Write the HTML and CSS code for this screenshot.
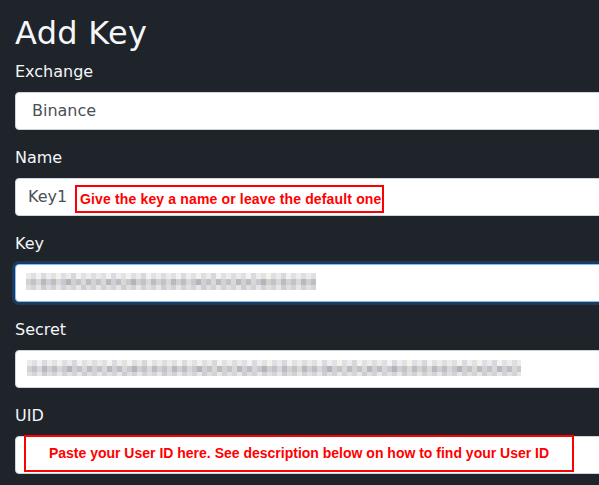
FILE: index.html
```html
<!DOCTYPE html>
<html>
<head>
<meta charset="utf-8">
<link rel="stylesheet" href="styles.css">
</head>
<body>
<div class="container">
  <h2 class="title">Add Key</h2>
  <div class="group">
    <label class="label">Exchange</label>
    <div class="control select">Binance</div>
  </div>
  <div class="group">
    <label class="label">Name</label>
    <div class="control">Key1
      <div class="note note-name">Give the key a name or leave the default one</div>
    </div>
  </div>
  <div class="group">
    <label class="label">Key</label>
    <div class="control focus"><span class="blur blur-key"></span></div>
  </div>
  <div class="group">
    <label class="label">Secret</label>
    <div class="control"><span class="blur blur-secret"></span></div>
  </div>
  <div class="group">
    <label class="label">UID</label>
    <div class="control">
      <div class="note note-uid">Paste your User ID here. See description below on how to find your User ID</div>
    </div>
  </div>
</div>
</body>
</html>
```
FILE: styles.css
```css
html, body {
  margin: 0;
  padding: 0;
  background: #1f232a;
  overflow: hidden;
}
.container {
  width: 720px;
  padding: 14px 15px;
  font-family: "DejaVu Sans", sans-serif;
  color: #f4f6f8;
}
.title {
  font-size: 32px;
  font-weight: 400;
  line-height: 38.4px;
  margin: 0 0 8px 0;
  letter-spacing: 0.3px;
}
.group {
  margin-bottom: 16px;
}
.label {
  display: block;
  font-size: 16px;
  line-height: 24px;
  margin-bottom: 8px;
}
.control {
  position: relative;
  box-sizing: border-box;
  height: 38px;
  padding: 6px 12px;
  line-height: 24px;
  font-size: 16px;
  color: #495057;
  background: #fff;
  border: 1px solid #ced4da;
  border-radius: 4px;
}
.select {
  padding-left: 16px;
}
.focus {
  border-color: #80bdff;
  box-shadow: 0 0 0 3px #1d3a5c;
}
.blur {
  display: block;
  height: 17px;
  margin-top: 2px;
  margin-left: -2px;
  background:
    repeating-linear-gradient(to right, #ecebeb 0 5px, #e0e0e4 5px 10px, #f4f2f1 10px 15px, #d8dbe0 15px 20px, #eeeeee 20px 25px, #e2e2e2 25px 30px, #f5f2ec 30px 35px, #dcdfe4 35px 40px, #ebebeb 40px 45px, #d6d8dd 45px 50px, #f2f2f2 50px 55px, #e1e1e1 55px 60px, #ededf0 60px 65px, #dedede 65px 70px) 0 0 / 100% 6px no-repeat,
    repeating-linear-gradient(to right, #d2d2d6 0 5px, #c2c2c7 5px 10px, #dad8d6 10px 15px, #b8b8be 15px 20px, #cdd0d4 20px 25px, #bebec2 25px 30px, #d7d7d7 30px 35px, #c6c9d0 35px 40px, #b5b5b9 40px 45px, #d0d0d0 45px 50px, #c1c3c7 50px 55px, #d8d8d8 55px 60px, #bbbbc0 60px 65px) 0 6px / 100% 6px no-repeat,
    repeating-linear-gradient(to right, #e0e0e0 0 5px, #d4d4d8 5px 10px, #e8e6e4 10px 15px, #cacdd2 15px 20px, #dedede 20px 25px, #d2d2d4 25px 30px, #e6e6e6 30px 35px, #d0d2d8 35px 40px) 0 12px / 100% 5px no-repeat;
}
.blur-key {
  width: 290px;
}
.blur-secret {
  width: 494px;
  height: 16px;
  margin-top: 3px;
  margin-left: -1px;
}
.note {
  position: absolute;
  box-sizing: border-box;
  border: 2px solid #ff0000;
  color: #ff0000;
  font-family: "Liberation Sans", Arial, sans-serif;
  font-weight: 700;
  font-size: 14px;
  background: #fff;
}
.note-name {
  left: 59px;
  top: 6px;
  height: 28px;
  width: 309px;
  line-height: 24px;
  padding-left: 3px;
  letter-spacing: 0.15px;
  white-space: nowrap;
}
.note-uid {
  left: 8px;
  top: -2px;
  height: 37px;
  width: 550px;
  line-height: 33px;
  text-align: center;
  white-space: nowrap;
}
```
